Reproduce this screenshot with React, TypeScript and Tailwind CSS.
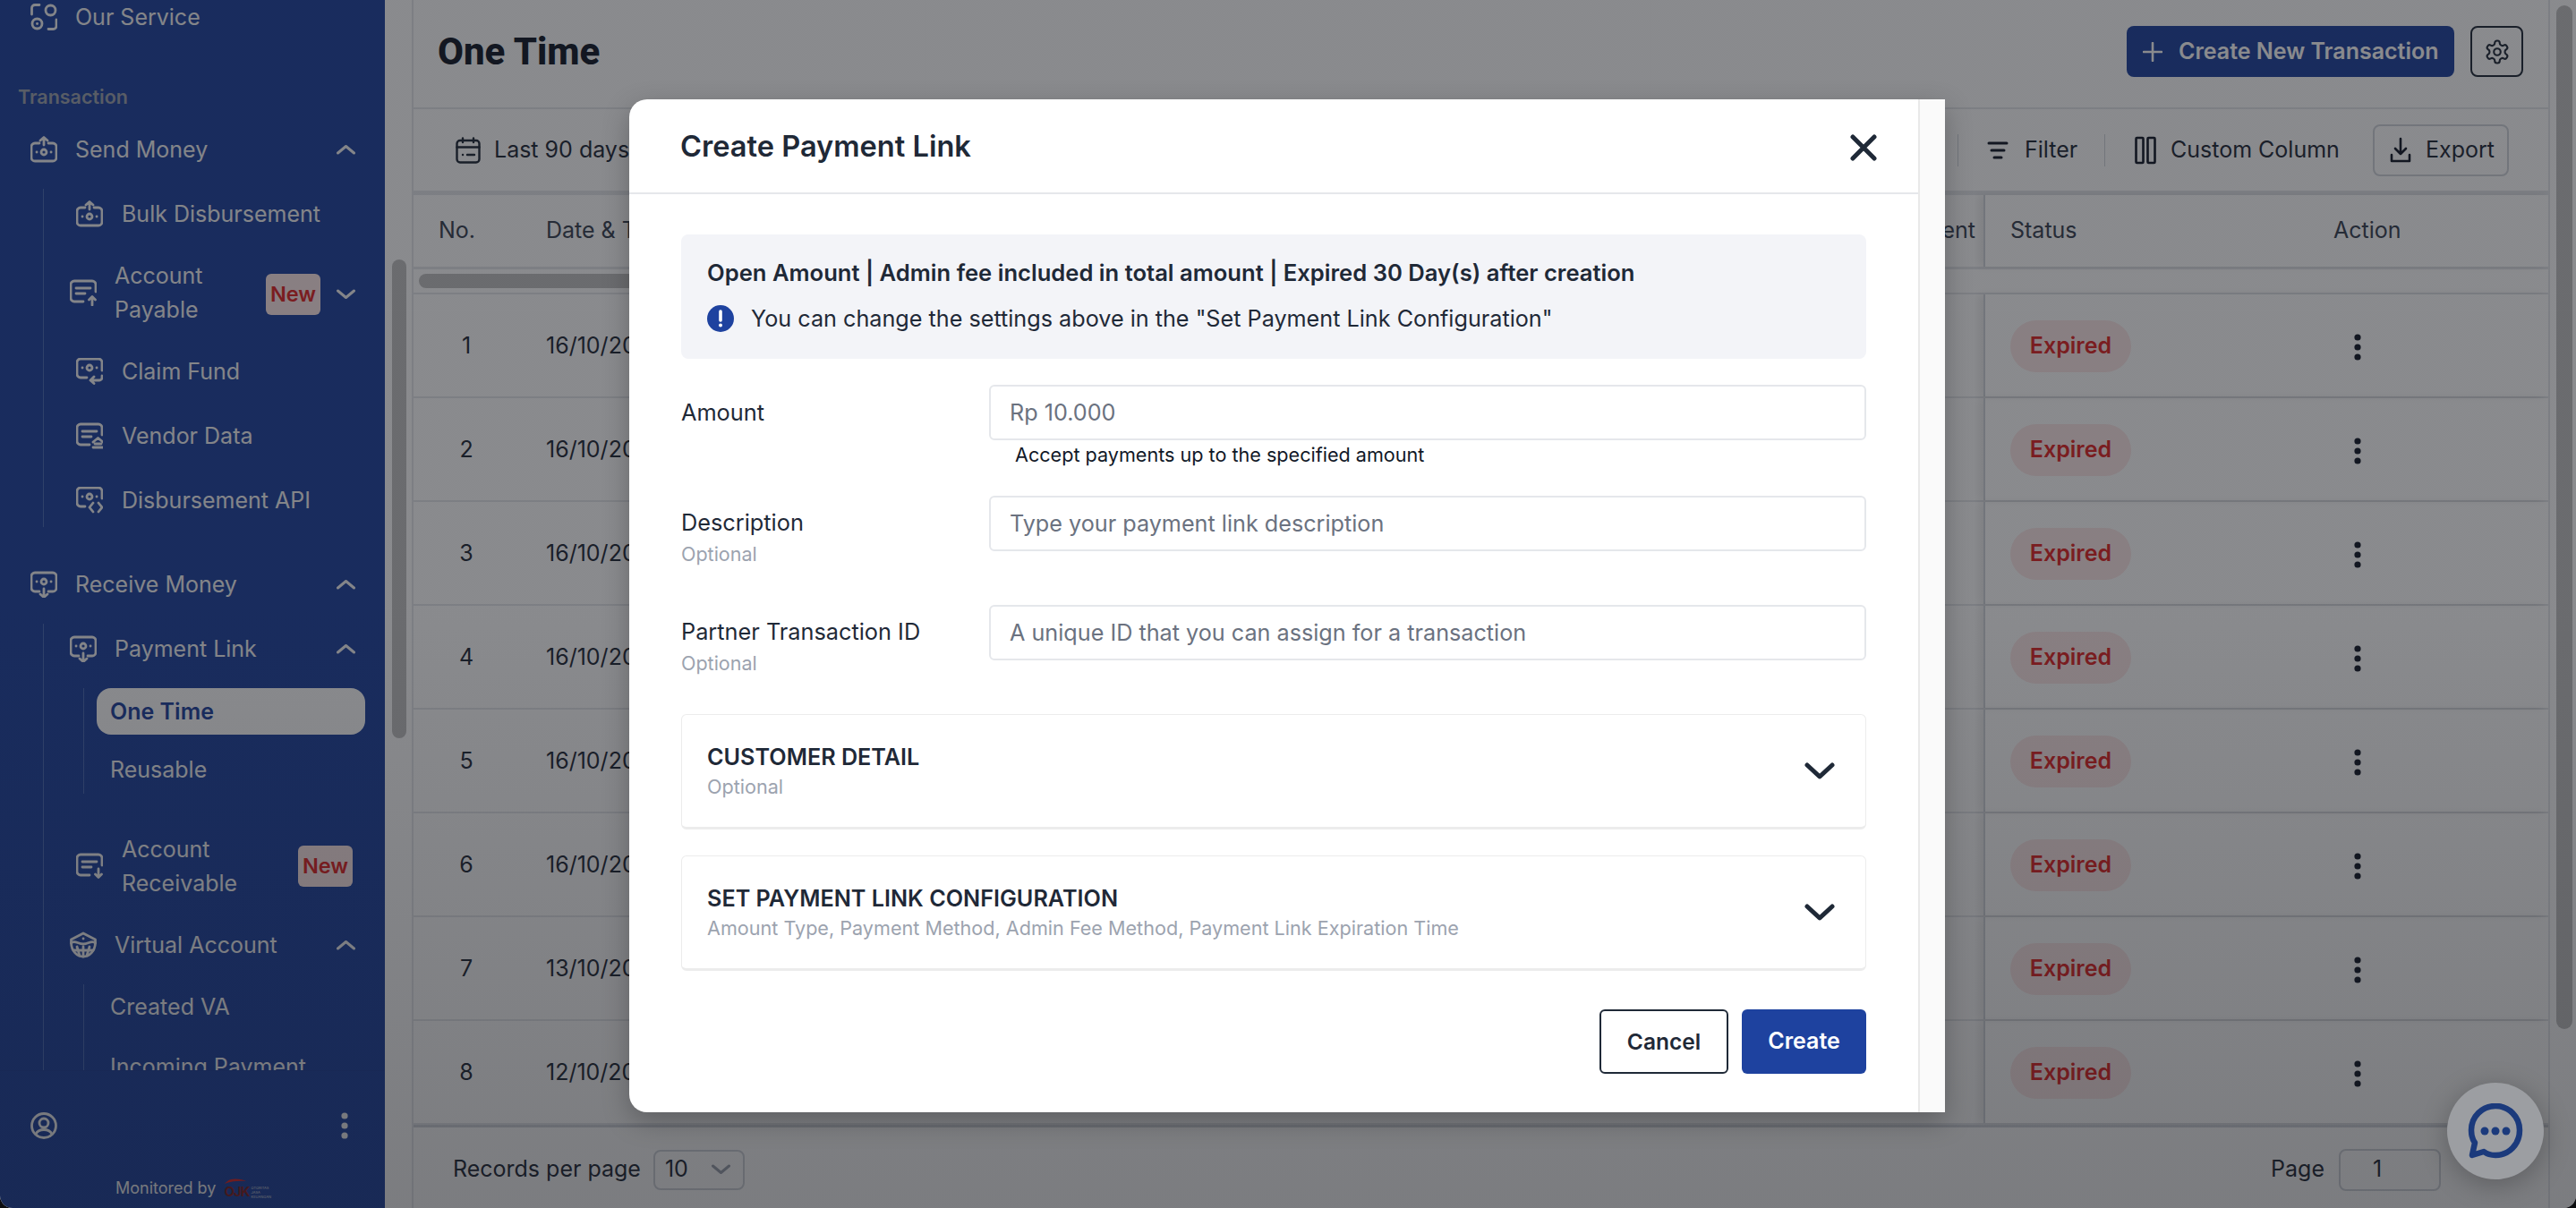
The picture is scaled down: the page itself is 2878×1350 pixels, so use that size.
import React from 'react';

const SIDE_TEXT = 'text-[25px] leading-[38px] text-[#f3f4f6]';

const Chevron = ({ up = false, className = '' }: { up?: boolean; className?: string }) => (
  <svg width="21" height="12" viewBox="0 0 21 12" fill="none" className={className}>
    <path d={up ? 'M1.5 10 L10.5 2.5 L19.5 10' : 'M1.5 2 L10.5 9.5 L19.5 2'} stroke="currentColor" strokeWidth="3" strokeLinecap="round" strokeLinejoin="round" />
  </svg>
);

// money card with a dot either side and something on top of it
const MoneyIcon = ({ kind }: { kind: 'send' | 'receive' | 'claim' | 'api' }) => (
  <svg width="30" height="30" viewBox="0 0 30 30" fill="none" stroke="currentColor" strokeWidth="2.8" strokeLinecap="round" strokeLinejoin="round">
    {kind === 'send' && (
      <>
        <path d="M10 8 H5 a4 4 0 0 0 -4 4 V24 a4 4 0 0 0 4 4 H25 a4 4 0 0 0 4 -4 V12 a4 4 0 0 0 -4 -4 H20" />
        <path d="M15 10 V2 M11 5 L15 1.5 L19 5" />
        <circle cx="15" cy="18" r="3" />
        <path d="M7 18 h.1 M23 18 h.1" />
      </>
    )}
    {kind === 'receive' && (
      <>
        <path d="M10 23 H5 a4 4 0 0 1 -4 -4 V6 a4 4 0 0 1 4 -4 H25 a4 4 0 0 1 4 4 V19 a4 4 0 0 1 -4 4 H20" />
        <path d="M15 20 V29 M11 26 L15 29.5 L19 26" />
        <circle cx="15" cy="12" r="3" />
        <path d="M7 12 h.1 M23 12 h.1" />
      </>
    )}
    {kind === 'claim' && (
      <>
        <path d="M12 22 H5 a4 4 0 0 1 -4 -4 V5 a4 4 0 0 1 4 -4 H25 a4 4 0 0 1 4 4 V14" />
        <circle cx="15" cy="11" r="3" />
        <path d="M7 11 h.1 M23 11 h.1" />
        <path d="M29 20 V22 a3 3 0 0 1 -3 3 H17 M20 21 L16 25 L20 28.5" />
      </>
    )}
    {kind === 'api' && (
      <>
        <path d="M10 22 H5 a4 4 0 0 1 -4 -4 V5 a4 4 0 0 1 4 -4 H25 a4 4 0 0 1 4 4 V13" />
        <circle cx="15" cy="11" r="3" />
        <path d="M7 11 h.1 M23 11 h.1" />
        <path d="M19 18 L15 23 L19 28 M25 18 L29 23 L25 28" />
      </>
    )}
  </svg>
);

const DocIcon = ({ kind }: { kind: 'up' | 'down' | 'vendor' }) => (
  <svg width="30" height="30" viewBox="0 0 30 30" fill="none" stroke="currentColor" strokeWidth="2.8" strokeLinecap="round" strokeLinejoin="round">
    <path d="M15 25 H5 a4 4 0 0 1 -4 -4 V6 a4 4 0 0 1 4 -4 H25 a4 4 0 0 1 4 4 V14" />
    <path d="M7 10 H23 M7 16 H17" />
    {kind === 'up' && <path d="M25 29 V20 M21.5 23 L25 19.5 L28.5 23" />}
    {kind === 'down' && <path d="M25 18 V27 M21.5 24 L25 27.5 L28.5 24" />}
    {kind === 'vendor' && <path d="M19 22 L24.5 17.5 L30 22 M21 24 H28 M19 28 H30" />}
  </svg>
);

const ServiceIcon = () => (
  <svg width="30" height="30" viewBox="0 0 30 30" fill="none" stroke="currentColor" strokeWidth="2.8" strokeLinecap="round">
    <path d="M1.5 12 V5 a3.5 3.5 0 0 1 3.5 -3.5 H10" />
    <path d="M29 18 V25 a3.5 3.5 0 0 1 -3.5 3.5 H20" />
    <circle cx="22.5" cy="7.5" r="5.5" />
    <circle cx="7.5" cy="22.5" r="5.5" />
    <path d="M7.5 22.5 h.1" />
  </svg>
);

const VaIcon = () => (
  <svg width="30" height="30" viewBox="0 0 30 30" fill="none" stroke="currentColor" strokeWidth="2.8" strokeLinecap="round" strokeLinejoin="round">
    <path d="M1.5 13 V9 L15 2 L28.5 9 V13" />
    <path d="M1.5 13 C5 9 9 14 15 14 C21 14 25 9 28.5 13 C28 22 22 28 15 28 C8 28 2 22 1.5 13 Z" />
    <path d="M15 8 h.1 M8 17 L11 27 M15 17 V28 M22 17 L19 27 M4 21 H26" />
  </svg>
);

const UserIcon = () => (
  <svg width="30" height="30" viewBox="0 0 30 30" fill="none" stroke="currentColor" strokeWidth="2.8" strokeLinecap="round">
    <circle cx="15" cy="15" r="13.5" />
    <circle cx="15" cy="12" r="5" />
    <path d="M6 24.5 C8 20 12 19.5 15 19.5 C18 19.5 22 20 24 24.5" />
  </svg>
);

const Kebab = ({ className = '' }: { className?: string }) => (
  <svg width="8" height="30" viewBox="0 0 8 30" fill="currentColor" className={className}>
    <circle cx="4" cy="4" r="3.6" />
    <circle cx="4" cy="15" r="3.6" />
    <circle cx="4" cy="26" r="3.6" />
  </svg>
);

const NewBadge = ({ className = '' }: { className?: string }) => (
  <span className={`flex h-[46px] w-[61px] shrink-0 items-center justify-center rounded-[6px] bg-[#fde8e8] text-[23.5px] font-semibold text-[#e02424] ${className}`}>New</span>
);

const Sidebar = () => (
  <aside className="flex h-full w-[430px] shrink-0 flex-col rounded-bl-[14px] bg-[#1e429f]">
    <nav className="h-[1196px] shrink-0 overflow-hidden">
      <div className={`flex h-[38px] items-center pl-[34px] ${SIDE_TEXT}`}>
        <ServiceIcon />
        <span className="ml-[20px]">Our Service</span>
      </div>
      <div className="mt-[50px] flex h-[40px] items-center pl-[20px] text-[21.5px] font-semibold text-[#9ca3af]">Transaction</div>
      <div className={`flex h-[78px] items-center pl-[34px] pr-[33px] ${SIDE_TEXT}`}>
        <MoneyIcon kind="send" />
        <span className="ml-[20px] flex-1">Send Money</span>
        <Chevron up />
      </div>
      <div className={`ml-[48px] mt-[5px] flex h-[378px] flex-col border-l border-[#4b6cb7] ${SIDE_TEXT}`}>
        <div className="flex h-[55px] items-center pl-[36px]">
          <MoneyIcon kind="send" />
          <span className="ml-[21px]">Bulk Disbursement</span>
        </div>
        <div className="mt-[8px] flex h-[106px] items-center pl-[29px] pr-[33px]">
          <DocIcon kind="up" />
          <span className="ml-[20px] w-[169px]">Account Payable</span>
          <NewBadge className="mt-[3px]" />
          <Chevron className="ml-[18px] mt-[3px]" />
        </div>
        <div className="mt-[5px] flex h-[60px] items-center pl-[36px]">
          <MoneyIcon kind="claim" />
          <span className="ml-[21px]">Claim Fund</span>
        </div>
        <div className="mt-[12px] flex h-[60px] items-center pl-[36px]">
          <DocIcon kind="vendor" />
          <span className="ml-[21px]">Vendor Data</span>
        </div>
        <div className="mt-[12px] flex h-[60px] items-center pl-[36px]">
          <MoneyIcon kind="api" />
          <span className="ml-[21px]">Disbursement API</span>
        </div>
      </div>
      <div className={`mt-[44px] flex h-[39px] items-center pl-[34px] pr-[33px] ${SIDE_TEXT}`}>
        <MoneyIcon kind="receive" />
        <span className="ml-[20px] flex-1">Receive Money</span>
        <Chevron up />
      </div>
      <div className={`ml-[48px] mt-[25px] border-l border-[#4b6cb7] pt-[8px] ${SIDE_TEXT}`}>
        <div className="flex h-[39px] items-center pl-[29px] pr-[33px]">
          <MoneyIcon kind="receive" />
          <span className="ml-[20px] flex-1">Payment Link</span>
          <Chevron up />
        </div>
        <div className="ml-[44px] mt-[25px] h-[118px] border-l border-[#4b6cb7] pl-[14px]">
          <div className="flex h-[52px] w-[300px] items-center rounded-[16px] bg-white pl-[15px] font-semibold text-[#1e429f]">One Time</div>
          <div className="mt-[12px] flex h-[54px] items-center pl-[15px]">Reusable</div>
        </div>
        <div className="mt-[29px] flex h-[104px] items-center pl-[36px]">
          <DocIcon kind="down" />
          <span className="ml-[21px] w-[197px]">Account Receivable</span>
          <NewBadge />
        </div>
        <div className="mt-[16px] flex h-[40px] items-center pl-[29px] pr-[33px]">
          <VaIcon />
          <span className="ml-[20px] flex-1">Virtual Account</span>
          <Chevron up />
        </div>
        <div className="ml-[44px] mt-[24px] h-[120px] border-l border-[#4b6cb7] pl-[29px]">
          <div className="flex h-[50px] items-center">Created VA</div>
          <div className="mt-[18px] flex h-[48px] items-center">Incoming Payment</div>
        </div>
      </div>
    </nav>
    <div className={`flex flex-1 flex-col border-t border-[#1d3f98] ${SIDE_TEXT}`}>
      <div className="mt-[41px] flex h-[40px] items-center justify-between pl-[34px] pr-[41px]">
        <UserIcon />
        <Kebab />
      </div>
      <div className="mt-[35px] flex h-[30px] items-center pl-[129px] text-[18px]">
        <span>Monitored by</span>
        <div className="relative ml-[9px] flex h-[24px] w-[48px] items-end">
          <svg width="26" height="8" viewBox="0 0 26 8" className="absolute left-0 top-0" fill="none">
            <path d="M1 7 C5 1 14 0 25 4 C16 3 8 4 1 7 Z" fill="#e02424" />
          </svg>
          <span className="text-[15px] font-bold leading-[16px] tracking-[-1px] text-[#7f1d1d]">OJK</span>
          <span className="ml-[2px] w-[17px] text-[4px] leading-[5px] text-[#d1d5db]">OTORITAS JASA KEUANGAN</span>
        </div>
      </div>
    </div>
  </aside>
);

const ScrollTrack = ({ wClass, thumb }: { wClass: string; thumb: string }) => (
  <div className={`h-full shrink-0 border-[#e5e7eb] ${wClass}`}>
    <div className={`rounded-full bg-[#c1c1c1] ${thumb}`} />
  </div>
);

const rows = ['16/10/2025', '16/10/2025', '16/10/2025', '16/10/2025', '16/10/2025', '16/10/2025', '13/10/2025', '12/10/2025'];

const Page = () => (
  <main className="flex h-full min-w-0 flex-1 flex-col bg-white">
    <header className="flex h-[122px] shrink-0 items-center border-b-2 border-[#e5e7eb] pb-[5px] pl-[27px] pr-[28px]">
      <h1 className="flex-1 font-['Roboto',sans-serif] text-[42px] font-extrabold text-[#111827]">One Time</h1>
      <button className="flex h-[57px] w-[366px] items-center rounded-[8px] bg-[#1e429f] pl-[18px] font-semibold text-white">
        <svg width="22" height="22" viewBox="0 0 22 22" stroke="currentColor" strokeWidth="2.6" strokeLinecap="round" className="mr-[18px]">
          <path d="M11 1 V21 M1 11 H21" />
        </svg>
        <span className="text-[25px]">Create New Transaction</span>
      </button>
      <button className="ml-[18px] flex h-[57px] w-[59px] items-center justify-center rounded-[8px] border-2 border-[#1f2937] text-[#1f2937]">
        <svg width="30" height="30" viewBox="0 0 24 24" fill="none" stroke="currentColor" strokeWidth="1.7" strokeLinecap="round" strokeLinejoin="round">
          <path d="M12.22 2h-.44a2 2 0 0 0-2 2v.18a2 2 0 0 1-1 1.73l-.43.25a2 2 0 0 1-2 0l-.15-.08a2 2 0 0 0-2.73.73l-.22.38a2 2 0 0 0 .73 2.73l.15.1a2 2 0 0 1 1 1.72v.51a2 2 0 0 1-1 1.74l-.15.09a2 2 0 0 0-.73 2.73l.22.38a2 2 0 0 0 2.73.73l.15-.08a2 2 0 0 1 2 0l.43.25a2 2 0 0 1 1 1.73V20a2 2 0 0 0 2 2h.44a2 2 0 0 0 2-2v-.18a2 2 0 0 1 1-1.73l.43-.25a2 2 0 0 1 2 0l.15.08a2 2 0 0 0 2.73-.73l.22-.39a2 2 0 0 0-.73-2.73l-.15-.08a2 2 0 0 1-1-1.74v-.5a2 2 0 0 1 1-1.74l.15-.09a2 2 0 0 0 .73-2.73l-.22-.38a2 2 0 0 0-2.73-.73l-.15.08a2 2 0 0 1-2 0l-.43-.25a2 2 0 0 1-1-1.73V4a2 2 0 0 0-2-2z" />
          <circle cx="12" cy="12" r="3" />
        </svg>
      </button>
    </header>

    <div className="flex h-[91px] shrink-0 items-center pl-[47px] pr-[44px] text-[25px] text-[#1f2937]">
      <svg width="28" height="30" viewBox="0 0 28 30" fill="none" stroke="currentColor" strokeWidth="2.4" strokeLinecap="round" className="mr-[15px]">
        <rect x="1.5" y="4" width="25" height="24.5" rx="3.5" />
        <path d="M8 1.5 V6 M20 1.5 V6 M1.5 11.5 H26.5 M8 20 h.1 M13 20 H21" />
      </svg>
      <span className="flex-1">Last 90 days</span>
      <div className="h-[36px] w-px bg-[#d1d5db]" />
      <svg width="24" height="20" viewBox="0 0 24 20" fill="none" stroke="#111827" strokeWidth="3" strokeLinecap="round" className="ml-[32px] mr-[18px]">
        <path d="M2 2 H22 M5 10 H19 M8 18 H16" />
      </svg>
      <span className="w-[89px]">Filter</span>
      <div className="h-[36px] w-px bg-[#d1d5db]" />
      <svg width="24" height="32" viewBox="0 0 24 32" fill="none" stroke="#111827" strokeWidth="2.6" className="ml-[33px] mr-[16px]">
        <rect x="1.5" y="2" width="8" height="28" rx="1" />
        <rect x="14.5" y="2" width="8" height="28" rx="1" />
      </svg>
      <span className="w-[226px]">Custom Column</span>
      <button className="flex h-[58px] w-[152px] items-center rounded-[8px] border-2 border-[#d1d5db] pl-[17px]">
        <svg width="24" height="30" viewBox="0 0 24 30" fill="none" stroke="#111827" strokeWidth="2.6" strokeLinecap="round" strokeLinejoin="round" className="mr-[16px]">
          <path d="M12 2 V19 M6 13 L12 19 L18 13 M2 20 V27 H22 V20" />
        </svg>
        <span>Export</span>
      </button>
    </div>

    <div className="flex h-[88px] shrink-0 items-center border-b-[3px] border-t-[5px] border-[#e5e7eb] text-[25px] text-[#374151]">
      <span className="w-[148px] pl-[28px]">No.</span>
      <span className="flex-1">Date &amp; Time</span>
      <span className="pr-[9px]">Payment</span>
      <div className="flex h-full w-[631px] items-center border-l-2 border-[#d1d5db] shadow-[-6px_0_8px_rgba(0,0,0,0.08)]">
        <span className="ml-[28px] w-[361px]">Status</span>
        <span>Action</span>
      </div>
    </div>

    <div className="flex h-[28px] shrink-0 items-center border-b-2 border-[#e5e7eb] pl-[6px]">
      <div className="h-[16px] w-[1500px] rounded-full bg-[#c1c1c1]" />
    </div>

    <div className="min-h-0 flex-1">
      {rows.map((date, i) => (
        <div key={i} className="flex h-[116px] items-center border-b-2 border-[#e5e7eb] pt-[2px] text-[25px] text-[#1f2937]">
          <span className="w-[148px] pl-[44px]">
            <span className="inline-block w-[30px] text-center">{i + 1}</span>
          </span>
          <span className="flex-1">{date}</span>
          <div className="-mt-[2px] flex h-[114px] w-[631px] items-center border-l-2 border-[#d1d5db] pt-[2px] shadow-[-6px_0_8px_rgba(0,0,0,0.08)]">
            <span className="ml-[28px] flex h-[58px] w-[135px] items-center justify-center rounded-full bg-[#fde8e8] font-semibold text-[#e02424]">Expired</span>
            <Kebab className="ml-[249px] mt-[1px] text-[#111827]" />
          </div>
        </div>
      ))}
    </div>

    <footer className="flex h-[93px] shrink-0 items-center border-t-[3px] border-[#d1d5db] pl-[44px] pr-[120px] pt-[4px] text-[25px] text-[#1f2937]">
      <span>Records per page</span>
      <div className="ml-[14px] flex h-[45px] w-[102px] items-center justify-between rounded-[8px] border-2 border-[#d1d5db] pl-[11px] pr-[14px]">
        <span>10</span>
        <Chevron className="text-[#9ca3af]" />
      </div>
      <span className="ml-auto">Page</span>
      <div className="ml-[16px] flex h-[47px] w-[114px] items-center rounded-[8px] border-2 border-[#d1d5db] pl-[36px]">1</div>
    </footer>
  </main>
);

const ModalField = ({ label, placeholder, optional = false, helper }: { label: string; placeholder: string; optional?: boolean; helper?: string }) => (
  <div className="flex">
    <div className={`w-[344px] shrink-0 ${optional ? 'pt-[15px]' : 'flex h-[62px] items-center'}`}>
      <div className="text-[25.3px] leading-[30px] text-[#1f2937]">{label}</div>
      {optional && <div className="mt-[7px] text-[21.5px] leading-[26px] text-[#9ca3af]">Optional</div>}
    </div>
    <div className="flex-1">
      <input
        readOnly
        placeholder={placeholder}
        className="h-[62px] w-full rounded-[6px] border-2 border-[#e5e7eb] px-[21px] text-[25.2px] outline-none placeholder:text-[#6b7280]"
      />
      {helper && <div className="h-[30px] pl-[29px] pt-[2px] text-[21.6px] leading-[28px] text-[#111827]">{helper}</div>}
    </div>
  </div>
);

const ModalSection = ({ title, sub, className = '' }: { title: string; sub: string; className?: string }) => (
  <div className={`flex h-[129px] items-center rounded-[6px] border border-b-[3px] border-[#ececec] pl-[28px] pr-[34px] ${className}`}>
    <div className="flex-1">
      <div className="text-[25.2px] font-semibold leading-[30px] text-[#1f2937]">{title}</div>
      <div className="mt-[5px] text-[21.6px] leading-[26px] text-[#9ca3af]">{sub}</div>
    </div>
    <svg width="34" height="20" viewBox="0 0 34 20" fill="none" stroke="#1f2937" strokeWidth="5" strokeLinecap="round" strokeLinejoin="round">
      <path d="M3 3 L17 16 L31 3" />
    </svg>
  </div>
);

const Modal = () => (
  <div className="absolute left-[703px] top-[111px] flex h-[1132px] w-[1470px] rounded-l-[20px] bg-white shadow-[0_10px_30px_rgba(0,0,0,0.25)]">
    <div className="flex min-w-0 flex-1 flex-col">
      <div className="flex h-[106px] shrink-0 items-center justify-between border-b-2 border-[#e5e7eb] pl-[57px] pr-[46px]">
        <h2 className="text-[32.6px] font-semibold text-[#1f2937]">Create Payment Link</h2>
        <svg width="30" height="30" viewBox="0 0 30 30" fill="none" stroke="#1f2937" strokeWidth="5" strokeLinecap="round" className="mt-[4px]">
          <path d="M3 3 L27 27 M27 3 L3 27" />
        </svg>
      </div>
      <div className="flex flex-1 flex-col pl-[58px] pr-[58px] pt-[45px]">
        <div className="flex h-[139px] flex-col rounded-[8px] bg-[#f3f4f8] pl-[29px]">
          <div className="mt-[28px] text-[25.6px] font-semibold leading-[30px] text-[#1f2937]">Open Amount | Admin fee included in total amount | Expired 30 Day(s) after creation</div>
          <div className="mt-[21px] flex items-center text-[25.2px] leading-[30px] text-[#1f2937]">
            <svg width="30" height="30" viewBox="0 0 30 30" className="mr-[19px]">
              <circle cx="15" cy="15" r="15" fill="#1e429f" />
              <path d="M15 7 V17" stroke="#fff" strokeWidth="3.6" strokeLinecap="round" />
              <circle cx="15" cy="22.5" r="2" fill="#fff" />
            </svg>
            You can change the settings above in the "Set Payment Link Configuration"
          </div>
        </div>
        <div className="mt-[29px]">
          <ModalField label="Amount" placeholder="Rp 10.000" helper="Accept payments up to the specified amount" />
        </div>
        <div className="mt-[32px]">
          <ModalField label="Description" placeholder="Type your payment link description" optional />
        </div>
        <div className="mt-[44px]">
          <ModalField label="Partner Transaction ID" placeholder="A unique ID that you can assign for a transaction" optional />
        </div>
        <ModalSection className="mt-[44px]" title="CUSTOMER DETAIL" sub="Optional" />
        <ModalSection className="mt-[29px]" title="SET PAYMENT LINK CONFIGURATION" sub="Amount Type, Payment Method, Admin Fee Method, Payment Link Expiration Time" />
        <div className="mt-[43px] flex justify-end gap-[15px]">
          <button className="h-[72px] w-[144px] rounded-[6px] border-2 border-[#1f2937] text-[24.5px] font-semibold text-[#1f2937]">Cancel</button>
          <button className="h-[72px] w-[139px] rounded-[6px] bg-[#1e429f] text-[25px] font-semibold text-white">Create</button>
        </div>
      </div>
    </div>
    <div className="w-[30px] shrink-0 border-l-2 border-[#e9e9e9] bg-[#fafafa]" />
  </div>
);

const ChatBubble = () => (
  <div className="absolute left-[2734px] top-[1210px] flex h-[108px] w-[108px] items-center justify-center rounded-full bg-[#9c9ea2] shadow-[0_6px_30px_rgba(0,0,0,0.25)]">
    <svg width="62" height="62" viewBox="0 0 62 62" fill="none">
      <path d="M31 3 C46 3 58 15 58 30 C58 46 46 58 31 58 C26 58 22 57 18 54 L5 58 L8 44 C5 40 4 35 4 30 C4 15 16 3 31 3 Z" stroke="#1b3a7c" strokeWidth="6.5" strokeLinejoin="round" />
      <circle cx="19" cy="31" r="4.5" fill="#1b3a7c" />
      <circle cx="31" cy="31" r="4.5" fill="#1b3a7c" />
      <circle cx="43" cy="31" r="4.5" fill="#1b3a7c" />
    </svg>
  </div>
);

export default function App() {
  return (
    <div className="h-[1350px] w-[2878px] bg-[#0c0d10] font-['Inter',sans-serif]">
      <div className="relative flex h-full w-full overflow-hidden rounded-b-[14px] bg-white">
        <Sidebar />
        <ScrollTrack wClass="w-[32px] border-r-2 pl-[8px]" thumb="mt-[290px] h-[535px] w-[16px]" />
        <Page />
        <ScrollTrack wClass="w-[31px] border-l-2 pl-[7px]" thumb="mt-[6px] h-[1144px] w-[18px]" />
        <div className="absolute inset-0 bg-linear-to-b from-[#14161c]/50 via-[#14161c]/50 to-[#14161c]/56" />
        <Modal />
        <ChatBubble />
      </div>
    </div>
  );
}
